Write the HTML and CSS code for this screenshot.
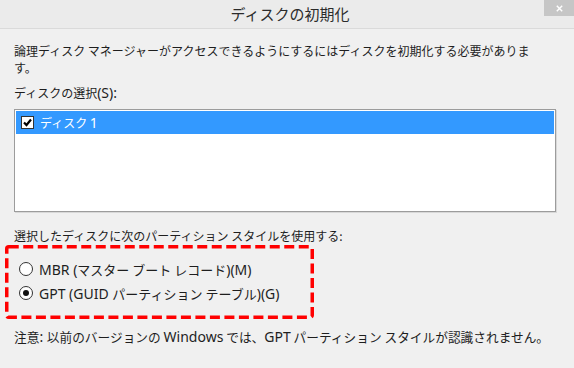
FILE: index.html
```html
<!DOCTYPE html>
<html lang="ja">
<head>
  <meta charset="UTF-8">
  <title>ディスクの初期化</title>
  <link rel="stylesheet" href="styles.css">
</head>
<body>
  <div class="title-bar">
    ディスクの初期化
    <div class="close-btn">
      <svg viewBox="0 0 10 10"><path d="M2 2l6 6M8 2l-6 6"/></svg>
    </div>
  </div>

  <div class="content">
    <p class="intro">論理ディスク マネージャーがアクセスできるようにするにはディスクを初期化する必要がありま<br>す。</p>

    <div class="label">ディスクの選択<span class="en">(S):</span></div>
    <div class="listbox">
      <div class="list-item selected">
        <span class="check">
          <svg viewBox="0 0 11 11"><path d="M2 5.5l2.5 2.5 4.5-5.5"/></svg>
        </span>
        <span>ディスク <span class="en">1</span></span>
      </div>
    </div>

    <div class="label style-label">選択したディスクに次のパーティション スタイルを使用する:</div>
    <div class="radio-group">
      <svg class="highlight" viewBox="0 0 309 74" preserveAspectRatio="none">
        <rect x="1.75" y="1.75" width="305.5" height="70.5" rx="2" ry="2"/>
      </svg>
      <div class="radio-row">
        <span class="radio"></span>
        <span><span class="en">MBR (</span>マスター ブート レコード<span class="en">)(M)</span></span>
      </div>
      <div class="radio-row">
        <span class="radio checked"></span>
        <span><span class="en">GPT (GUID </span>パーティション テーブル<span class="en">)(G)</span></span>
      </div>
    </div>

    <div class="note">注意<span class="en">: </span>以前のバージョンの <span class="en">Windows</span> では、<span class="en">GPT</span> パーティション スタイルが認識されません。</div>
  </div>
</body>
</html>
```

FILE: styles.css
```css
* {
  box-sizing: border-box;
  margin: 0;
  padding: 0;
}

body {
  font-family: "Noto Sans CJK JP", "Noto Sans", sans-serif;
  font-size: 12px;
  color: #1e1e1e;
  background-color: #f0f0f0;
  width: 574px;
  height: 368px;
  overflow: hidden;
}

/* latin runs render larger than kana in the original UI font */
.en {
  font-family: "Noto Sans", sans-serif;
  font-size: 14px;
  line-height: 1;
}

.title-bar {
  position: relative;
  height: 29px;
  background-color: #ebebeb;
  border-bottom: 1px solid #dadada;
  text-align: center;
  font-size: 15px;
  line-height: 27px;
  color: #2b2b2b;
  padding-left: 6px;
}

.close-btn {
  position: absolute;
  top: 0;
  right: 0;
  width: 30px;
  height: 16px;
  background-color: #c6c6c6;
  display: flex;
  align-items: center;
  justify-content: center;
}

.close-btn svg {
  width: 9px;
  height: 9px;
  stroke: #fff;
  stroke-width: 1.6;
}

.content {
  padding: 0 18px 0 14px;
}

.intro {
  margin-top: 13px;
  line-height: 17px;
}

.label {
  margin-top: 8px;
  line-height: 17px;
}

.listbox {
  margin-top: 8px;
  width: 542px;
  height: 103px;
  border: 1px solid #9c9c9c;
  box-shadow: 1px 1px 0 #d8d8d8;
  background-color: #fff;
  padding: 1px;
}

.list-item {
  height: 23px;
  display: flex;
  align-items: center;
  padding-left: 5px;
  gap: 6px;
}

.list-item.selected {
  background-color: #3399ff;
  color: #fff;
}

.check {
  width: 13px;
  height: 13px;
  border: 1px solid #333;
  background-color: #fff;
  display: flex;
  align-items: center;
  justify-content: center;
}

.check svg {
  width: 11px;
  height: 11px;
  fill: none;
  stroke: #000;
  stroke-width: 2.2;
}

.style-label {
  margin-top: 15px;
}

.radio-group {
  position: relative;
  margin-top: 1px;
  margin-left: -9px;
  width: 309px;
  height: 74px;
  padding: 12px 0 0 14px;
}

.highlight {
  position: absolute;
  top: 0;
  left: 0;
  width: 100%;
  height: 100%;
  fill: none;
  stroke: #ff0000;
  stroke-width: 3.5;
  stroke-dasharray: 10 4.5;
}

.radio-row {
  height: 24px;
  display: flex;
  align-items: center;
  gap: 6px;
  font-size: 13px;
}

.radio {
  width: 14px;
  height: 14px;
  border-radius: 50%;
  border: 1px solid #333;
  background-color: #fff;
  display: flex;
  align-items: center;
  justify-content: center;
}

.radio.checked::after {
  content: "";
  width: 6px;
  height: 6px;
  border-radius: 50%;
  background-color: #111;
}

.note {
  margin-top: 9px;
  line-height: 18px;
  font-size: 12.7px;
}
```
